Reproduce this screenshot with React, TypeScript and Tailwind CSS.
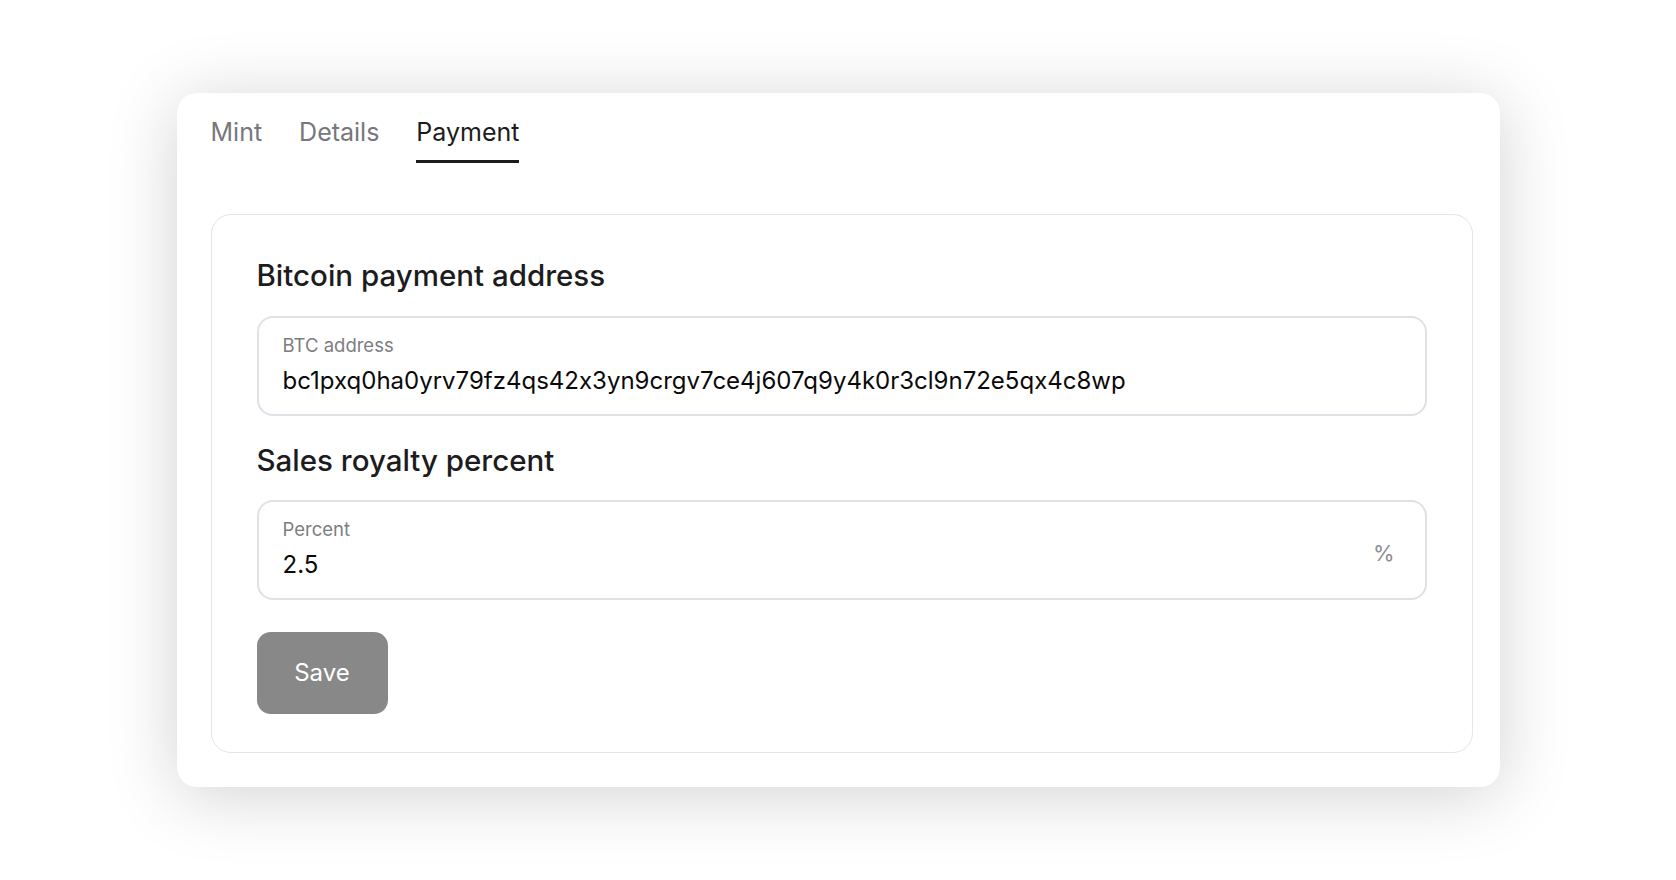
import { useState } from 'react'

const tabs = ['Mint', 'Details', 'Payment']

function Field({ label, value, suffix }: { label: string; value: string; suffix?: string }) {
  return (
    <div className="flex h-[100px] items-center justify-between rounded-[16px] border-2 border-[#e0e0e6] pl-6 pr-[30px]">
      <div className="flex flex-col pb-[2px]">
        <span className="text-[18.5px] leading-[22px] text-[#7d7d82]">{label}</span>
        <span className="mt-[10px] text-[24px] leading-[30px] text-[#0a0a0a]">{value}</span>
      </div>
      {suffix && <span className="mt-[6px] text-[22px] text-[#8e8e93]">{suffix}</span>}
    </div>
  )
}

export default function App() {
  const [active, setActive] = useState('Payment')

  return (
    <div className="min-h-screen bg-white pt-[93px] font-['Inter',sans-serif] [font-feature-settings:'calt'_0]">
      <div className="mx-auto w-[1323px] rounded-[20px] bg-white pb-[34px] pl-[34px] pr-[27px] pt-[23px] shadow-[0_8px_70px_rgba(0,0,0,0.18)]">
        {/* Tabs */}
        <div className="flex gap-[37px]">
          {tabs.map((tab) => (
            <button
              key={tab}
              onClick={() => setActive(tab)}
              className={
                tab === active
                  ? 'border-b-[3px] border-[#1c1c1e] pb-3 text-[25px] leading-[32px] text-[#1c1c1e]'
                  : 'border-b-[3px] border-transparent pb-3 text-[25px] leading-[32px] text-[#77777c]'
              }
            >
              {tab}
            </button>
          ))}
        </div>

        {/* Payment settings */}
        <div className="mt-[51px] rounded-[20px] border border-[#e4e4e9] px-[45px] pb-[38px] pt-[43px]">
          <h2 className="text-[29.5px] font-medium leading-[34px] text-[#1c1c1e]">Bitcoin payment address</h2>
          <div className="mt-6">
            <Field label="BTC address" value="bc1pxq0ha0yrv79fz4qs42x3yn9crgv7ce4j607q9y4k0r3cl9n72e5qx4c8wp" />
          </div>

          <h2 className="mt-[27px] text-[29.5px] font-medium leading-[34px] text-[#1c1c1e]">Sales royalty percent</h2>
          <div className="mt-[23px]">
            <Field label="Percent" value="2.5" suffix="%" />
          </div>

          <button className="mt-8 h-[82px] w-[131px] rounded-[14px] bg-[#888888] text-[24px] text-white">Save</button>
        </div>
      </div>
    </div>
  )
}
